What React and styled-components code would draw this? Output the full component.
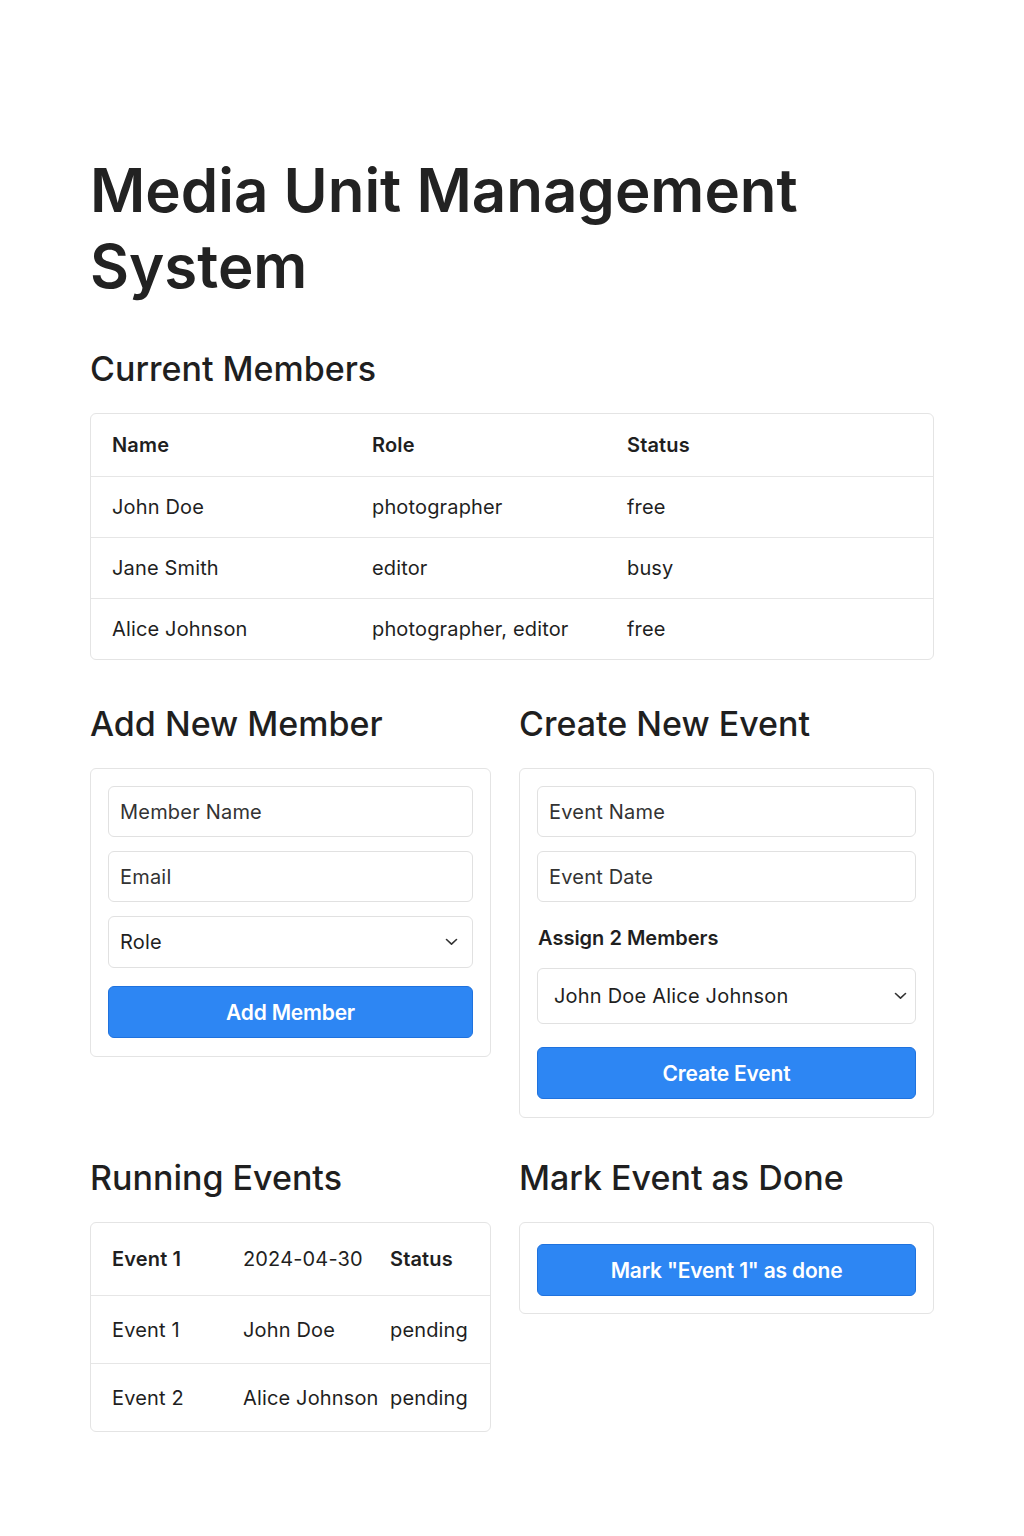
import React from "react";
import styled, { createGlobalStyle } from "styled-components";

const Global = createGlobalStyle`
  * { box-sizing: border-box; }
  html, body { margin: 0; padding: 0; background: #ffffff; }
  body { font-family: Inter, "Noto Sans", "Liberation Sans", sans-serif; color: #1f1f1f; }
`;

const Page = styled.div`
  width: 1024px;
  min-height: 1536px;
  padding: 152px 90px 80px 90px;
`;

const Title = styled.h1`
  margin: 0 0 45px 0;
  font-size: 60px;
  line-height: 76px;
  font-weight: 600;
  letter-spacing: 0;
  color: #222222;
`;

const SectionTitle = styled.h2`
  margin: 0 0 24px 0;
  font-size: 34px;
  line-height: 40px;
  font-weight: 500;
  letter-spacing: 0;
  color: #1f1f1f;
`;

const Card = styled.div`
  border: 1px solid #e4e4e4;
  border-radius: 6px;
  background: #fff;
`;

const FormCard = styled(Card)`
  padding: 17px 17px 18px 17px;
  display: flex;
  flex-direction: column;
  gap: 14px;
`;

const TableRow = styled.div`
  display: grid;
  grid-template-columns: ${(p) => p.$cols};
  align-items: center;
  height: ${(p) => p.$h}px;
  padding: 0 21px;
  border-top: ${(p) => (p.$first ? "none" : "1px solid #e6e6e6")};
  font-size: 20px;
  letter-spacing: 0.15px;
  color: #1f1f1f;
`;

const Cell = styled.div`
  font-weight: ${(p) => (p.$bold ? 600 : 400)};
  white-space: nowrap;
`;

const Section = styled.section`
  margin-bottom: ${(p) => p.$mb || 0}px;
`;

const TwoCol = styled.div`
  display: grid;
  grid-template-columns: 401px 415px;
  column-gap: 28px;
  align-items: start;
  margin-bottom: ${(p) => p.$mb || 0}px;
`;

const TextInput = styled.input`
  display: block;
  width: 100%;
  height: 51px;
  border: 1px solid #e1e1e1;
  border-radius: 6px;
  padding: 0 11px;
  font-family: inherit;
  font-size: 20px;
  letter-spacing: 0.2px;
  color: #2a2a2a;
  background: #fff;
  outline: none;
  &::placeholder { color: #333333; opacity: 1; }
`;

const SelectBox = styled.div`
  height: ${(p) => p.$h || 52}px;
  border: 1px solid #e1e1e1;
  border-radius: 6px;
  padding: 0 ${(p) => p.$pr || 14}px 0 ${(p) => p.$pl || 11}px;
  display: flex;
  align-items: center;
  justify-content: space-between;
  font-size: 20px;
  letter-spacing: 0.2px;
  color: #1f1f1f;
`;

const Label = styled.div`
  font-size: 20px;
  font-weight: 600;
  color: #1f1f1f;
  margin: 10px 0 4px 1px;
`;

const Button = styled.button`
  display: block;
  width: 100%;
  height: 52px;
  border: 1px solid #1f72de;
  border-radius: 6px;
  background: #2d86f3;
  color: #ffffff;
  font-family: inherit;
  font-size: 21px;
  font-weight: 600;
  letter-spacing: -0.2px;
  cursor: pointer;
  margin-top: ${(p) => p.$mt || 0}px;
`;

const MarkCard = styled(Card)`
  padding: 21px 17px 17px 17px;
`;

const Chevron = () => (
  <svg width="13" height="8" viewBox="0 0 13 8" fill="none">
    <path d="M1.5 1.5 L6.5 6.2 L11.5 1.5" stroke="#333" strokeWidth="1.6" strokeLinecap="round" strokeLinejoin="round" />
  </svg>
);

const members = [
  ["John Doe", "photographer", "free"],
  ["Jane Smith", "editor", "busy"],
  ["Alice Johnson", "photographer, editor", "free"],
];

const events = [
  ["Event 1", "John Doe", "pending"],
  ["Event 2", "Alice Johnson", "pending"],
];

export default function App() {
  const mcols = "260px 255px 1fr";
  const ecols = "131px 147px 1fr";
  return (
    <>
      <Global />
      <Page>
        <Title>
          Media Unit Management
          <br />
          System
        </Title>

        <Section $mb={44}>
          <SectionTitle>Current Members</SectionTitle>
          <Card>
            <TableRow $cols={mcols} $h={62} $first>
              <Cell $bold>Name</Cell>
              <Cell $bold>Role</Cell>
              <Cell $bold>Status</Cell>
            </TableRow>
            {members.map((m) => (
              <TableRow key={m[0]} $cols={mcols} $h={61}>
                <Cell>{m[0]}</Cell>
                <Cell>{m[1]}</Cell>
                <Cell>{m[2]}</Cell>
              </TableRow>
            ))}
          </Card>
        </Section>

        <TwoCol $mb={40}>
          <div>
            <SectionTitle>Add New Member</SectionTitle>
            <FormCard>
              <TextInput placeholder="Member Name" />
              <TextInput placeholder="Email" />
              <SelectBox>
                <span>Role</span>
                <Chevron />
              </SelectBox>
              <Button $mt={4}>Add Member</Button>
            </FormCard>
          </div>
          <div>
            <SectionTitle>Create New Event</SectionTitle>
            <FormCard>
              <TextInput placeholder="Event Name" />
              <TextInput placeholder="Event Date" />
              <Label>Assign 2 Members</Label>
              <SelectBox $h={56} $pl={16} $pr={8}>
                <span>John Doe Alice Johnson</span>
                <Chevron />
              </SelectBox>
              <Button $mt={9}>Create Event</Button>
            </FormCard>
          </div>
        </TwoCol>

        <TwoCol>
          <div>
            <SectionTitle>Running Events</SectionTitle>
            <Card>
              <TableRow $cols={ecols} $h={72} $first>
                <Cell $bold>Event 1</Cell>
                <Cell>2024-04-30</Cell>
                <Cell $bold>Status</Cell>
              </TableRow>
              {events.map((e) => (
                <TableRow key={e[0]} $cols={ecols} $h={68}>
                  <Cell>{e[0]}</Cell>
                  <Cell>{e[1]}</Cell>
                  <Cell>{e[2]}</Cell>
                </TableRow>
              ))}
            </Card>
          </div>
          <div>
            <SectionTitle>Mark Event as Done</SectionTitle>
            <MarkCard>
              <Button>Mark "Event 1" as done</Button>
            </MarkCard>
          </div>
        </TwoCol>
      </Page>
    </>
  );
}
